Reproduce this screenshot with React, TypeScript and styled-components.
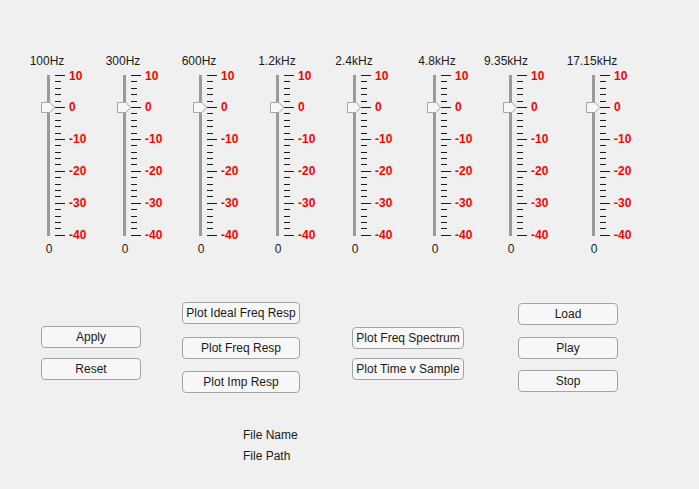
import React from "react";
import styled, { createGlobalStyle } from "styled-components";

const GlobalStyle = createGlobalStyle`
  html, body {
    margin: 0;
    padding: 0;
    background: #f0f0f0;
  }
  body {
    font-family: "Liberation Sans", Arial, Helvetica, sans-serif;
    font-size: 12px;
    color: #1a1a1a;
  }
  * { box-sizing: border-box; }
`;

const Page = styled.div`
  width: 699px;
  height: 489px;
  overflow: hidden;
  background: #f0f0f0;
  padding-top: 54px;
`;

const SliderRow = styled.div`
  display: flex;
  align-items: flex-start;
  padding-left: 41px;
`;

const SliderColumn = styled.div<{ $ml: number }>`
  width: 76px;
  flex: none;
  margin-left: ${(p) => p.$ml}px;
  display: flex;
  flex-direction: column;
  align-items: flex-start;
`;

const CenteredOnLane = styled.div<{ $dx?: number }>`
  width: 14px;
  height: 14px;
  line-height: 14px;
  display: flex;
  justify-content: center;
  white-space: nowrap;
  margin-left: ${(p) => p.$dx ?? 0}px;
  color: #1a1a1a;
`;

const SliderBody = styled.div`
  display: flex;
  height: 161px;
  margin-top: 7px;
`;

const Lane = styled.div`
  position: relative;
  width: 14px;
  height: 100%;
  display: flex;
  justify-content: center;
`;

const Track = styled.div`
  width: 3px;
  height: 100%;
  background: #9a9a9a;
`;

const Thumb = styled.svg`
  position: absolute;
  left: 0;
  top: 27px;
`;

const Scale = styled.div`
  height: 100%;
  display: flex;
  flex-direction: column;
  justify-content: space-between;
`;

const TickRow = styled.div`
  height: 1px;
  display: flex;
  align-items: center;
`;

const Tick = styled.div<{ $major: boolean }>`
  width: ${(p) => (p.$major ? 10 : 6)}px;
  height: 1px;
  background: #1a1a1a;
  flex: none;
`;

const TickLabel = styled.span`
  margin-left: 4px;
  font-weight: bold;
  color: #ff0000;
  line-height: 14px;
  white-space: nowrap;
`;

const ValueRow = styled(CenteredOnLane)`
  margin-top: 6px;
`;

const ButtonArea = styled.div`
  display: flex;
  align-items: flex-start;
  padding-left: 41px;
  margin-top: 46px;
`;

const ButtonColumn = styled.div<{ $w: number; $ml: number; $top: number; $gap: number }>`
  display: flex;
  flex-direction: column;
  width: ${(p) => p.$w}px;
  margin-left: ${(p) => p.$ml}px;
  margin-top: ${(p) => p.$top}px;
  gap: ${(p) => p.$gap}px;
`;

const Button = styled.button`
  height: 22px;
  width: 100%;
  padding: 0;
  border: 1px solid #a3a3a3;
  border-radius: 4px;
  background: #f7f7f7;
  font-family: "Liberation Sans", Arial, Helvetica, sans-serif;
  font-size: 12px;
  color: #1a1a1a;
  white-space: nowrap;
  cursor: pointer;
`;

const FileInfo = styled.div`
  display: flex;
  flex-direction: column;
  gap: 7px;
  margin-left: 243px;
  margin-top: 35px;
`;

const FileText = styled.div`
  height: 14px;
  line-height: 14px;
  color: #1a1a1a;
`;

const bands = [
  { label: "100Hz", ml: 0, dx: -1 },
  { label: "300Hz", ml: 0, dx: -1 },
  { label: "600Hz", ml: 0, dx: -1 },
  { label: "1.2kHz", ml: 1, dx: 0 },
  { label: "2.4kHz", ml: 1, dx: 0 },
  { label: "4.8kHz", ml: 4, dx: 3 },
  { label: "9.35kHz", ml: 0, dx: -4 },
  { label: "17.15kHz", ml: 7, dx: -1 },
];

const ticks = Array.from({ length: 26 }, (_, i) => 10 - i * 2);

function Slider({ label, ml, dx }: { label: string; ml: number; dx: number }) {
  return (
    <SliderColumn $ml={ml}>
      <CenteredOnLane $dx={dx}>{label}</CenteredOnLane>
      <SliderBody>
        <Lane>
          <Track />
          <Thumb width="14" height="11" viewBox="0 0 14 11">
            <path
              d="M0.5 0.5 H9 L13.5 5.5 L9 10.5 H0.5 Z"
              fill="#f7f7f7"
              stroke="#a6a6a6"
              strokeWidth="1"
            />
          </Thumb>
        </Lane>
        <Scale>
          {ticks.map((v) => {
            const major = v % 10 === 0;
            return (
              <TickRow key={v}>
                <Tick $major={major} />
                {major && <TickLabel>{v}</TickLabel>}
              </TickRow>
            );
          })}
        </Scale>
      </SliderBody>
      <ValueRow $dx={1}>0</ValueRow>
    </SliderColumn>
  );
}

export default function App() {
  return (
    <>
      <GlobalStyle />
      <Page>
        <SliderRow>
          {bands.map((b) => (
            <Slider key={b.label} label={b.label} ml={b.ml} dx={b.dx} />
          ))}
        </SliderRow>
        <ButtonArea>
          <ButtonColumn $w={100} $ml={0} $top={24} $gap={10}>
            <Button>Apply</Button>
            <Button>Reset</Button>
          </ButtonColumn>
          <ButtonColumn $w={118} $ml={41} $top={0} $gap={12.5}>
            <Button>Plot Ideal Freq Resp</Button>
            <Button>Plot Freq Resp</Button>
            <Button>Plot Imp Resp</Button>
          </ButtonColumn>
          <ButtonColumn $w={112} $ml={52} $top={24.5} $gap={9.5}>
            <Button>Plot Freq Spectrum</Button>
            <Button>Plot Time v Sample</Button>
          </ButtonColumn>
          <ButtonColumn $w={100} $ml={54} $top={1} $gap={11.5}>
            <Button>Load</Button>
            <Button>Play</Button>
            <Button>Stop</Button>
          </ButtonColumn>
        </ButtonArea>
        <FileInfo>
          <FileText>File Name</FileText>
          <FileText>File Path</FileText>
        </FileInfo>
      </Page>
    </>
  );
}
